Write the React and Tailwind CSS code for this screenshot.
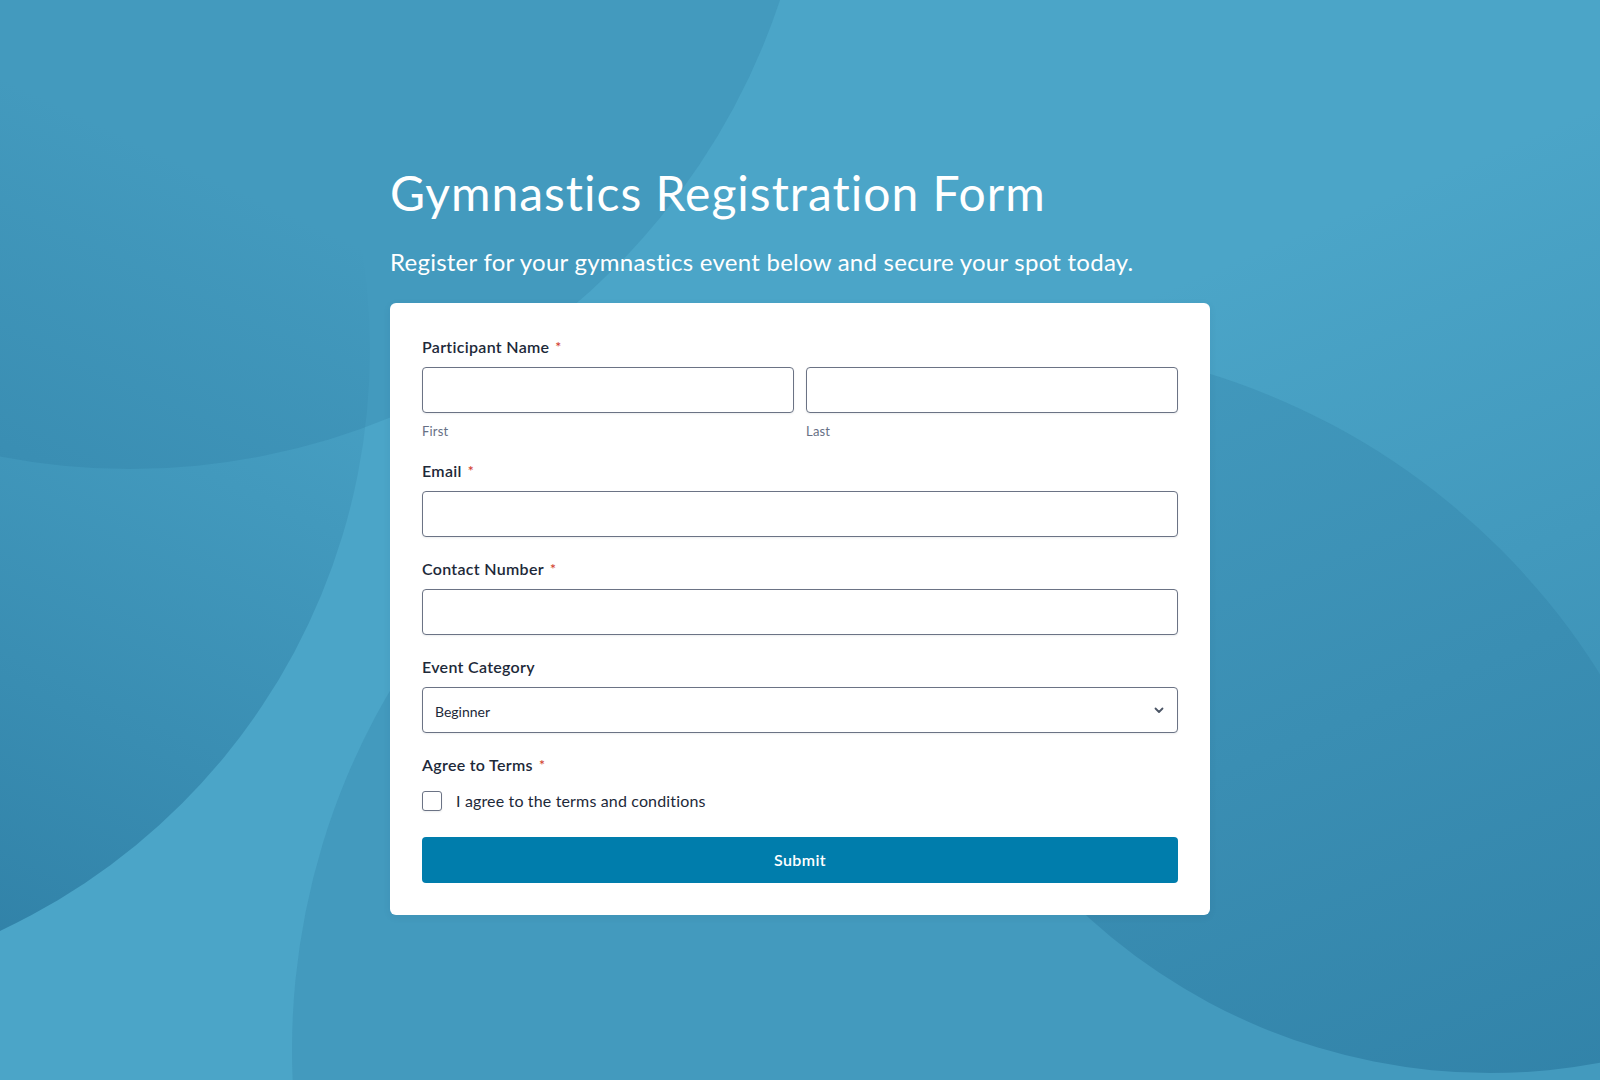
import React, { useState } from 'react';

function Label({ children, required }) {
  return (
    <label className="flex items-center text-base font-semibold leading-6 tracking-[0.3px] text-[#1d2939]">
      {children}
      {required && <span className="ml-[6px] text-sm leading-none text-[#d23f31]">*</span>}
    </label>
  );
}

function Background() {
  return (
    <svg className="absolute inset-0 h-full w-full" viewBox="0 0 1600 1080" preserveAspectRatio="none">
      <defs>
        <linearGradient id="gB" gradientUnits="userSpaceOnUse" x1="330" y1="230" x2="0" y2="930">
          <stop offset="0" stopColor="#1f6a92" stopOpacity="0" />
          <stop offset="1" stopColor="#1f6a92" stopOpacity="0.58" />
        </linearGradient>
        <linearGradient id="gQ" gradientUnits="userSpaceOnUse" x1="1250" y1="250" x2="1600" y2="1080">
          <stop offset="0" stopColor="#1f6a92" stopOpacity="0" />
          <stop offset="1" stopColor="#1f6a92" stopOpacity="0.48" />
        </linearGradient>
      </defs>
      <rect width="1600" height="1080" fill="#4ba5c8" />
      <circle cx="130" cy="-216" r="685" fill="#1f6a92" fillOpacity="0.18" />
      <circle cx="-271" cy="350" r="641" fill="url(#gB)" />
      <circle cx="1000" cy="1050" r="708" fill="#1f6a92" fillOpacity="0.18" />
      <circle cx="1490" cy="477" r="596" fill="url(#gQ)" />
    </svg>
  );
}

export default function App() {
  const [form, setForm] = useState({ first: '', last: '', email: '', phone: '', category: 'Beginner', agree: false });

  const handleChange = (e) => {
    const { name, value, type, checked } = e.target;
    setForm((prev) => ({ ...prev, [name]: type === 'checkbox' ? checked : value }));
  };

  const inputClass =
    'h-[46px] w-full rounded-[4px] border border-[#6b7385] bg-white px-3 text-sm text-[#1d2939] shadow-[0_1px_2px_rgba(16,24,40,0.08)] outline-none';

  return (
    <div className="relative min-h-screen w-full overflow-hidden font-[Lato,sans-serif] [font-variant-ligatures:none]">
      <Background />

      <div className="relative mx-auto w-[820px] pt-[163px] pb-10">
        <h1 className="text-[48px] font-normal leading-[60px] tracking-[1px] text-white">Gymnastics Registration Form</h1>
        <p className="mt-[23px] text-2xl leading-8 tracking-[0.25px] text-white">
          Register for your gymnastics event below and secure your spot today.
        </p>

        <form
          onSubmit={(e) => e.preventDefault()}
          className="mt-[25px] rounded-md bg-white p-8 shadow-[0_2px_8px_rgba(0,40,70,0.06)]"
        >
          {/* Participant Name */}
          <div>
            <Label required>Participant Name</Label>
            <div className="mt-2 grid grid-cols-2 gap-3">
              <div>
                <input name="first" value={form.first} onChange={handleChange} className={inputClass} />
                <p className="mt-[10px] text-[13px] leading-4 tracking-[0.2px] text-[#667085]">First</p>
              </div>
              <div>
                <input name="last" value={form.last} onChange={handleChange} className={inputClass} />
                <p className="mt-[10px] text-[13px] leading-4 tracking-[0.2px] text-[#667085]">Last</p>
              </div>
            </div>
          </div>

          {/* Email */}
          <div className="mt-5">
            <Label required>Email</Label>
            <input type="email" name="email" value={form.email} onChange={handleChange} className={`mt-2 ${inputClass}`} />
          </div>

          {/* Contact Number */}
          <div className="mt-5">
            <Label required>Contact Number</Label>
            <input type="tel" name="phone" value={form.phone} onChange={handleChange} className={`mt-2 ${inputClass}`} />
          </div>

          {/* Event Category */}
          <div className="mt-5">
            <Label>Event Category</Label>
            <div className="relative mt-2">
              <select
                name="category"
                value={form.category}
                onChange={handleChange}
                className={`${inputClass} appearance-none pl-[12px] pt-[3px]`}
              >
                <option>Beginner</option>
                <option>Intermediate</option>
                <option>Advanced</option>
              </select>
              <svg
                className="pointer-events-none absolute right-[13px] top-1/2 h-3 w-3 -translate-y-1/2 text-[#4b5565]"
                viewBox="0 0 12 12"
                fill="none"
                stroke="currentColor"
                strokeWidth="1.8"
                strokeLinecap="round"
                strokeLinejoin="round"
              >
                <path d="M2.5 4.5 6 8l3.5-3.5" />
              </svg>
            </div>
          </div>

          {/* Agree to Terms */}
          <div className="mt-5">
            <Label required>Agree to Terms</Label>
            <label className="mt-3 flex items-center gap-3 text-base leading-6 tracking-[0.15px] text-[#1d2939]">
              <input
                type="checkbox"
                name="agree"
                checked={form.agree}
                onChange={handleChange}
                className="h-5 w-5 appearance-none rounded-[3px] border border-[#6b7385] bg-white shadow-[0_1px_2px_rgba(16,24,40,0.08)]"
              />
              <span className="ml-[2px]">I agree to the terms and conditions</span>
            </label>
          </div>

          {/* Submit */}
          <button
            type="submit"
            className="mt-6 h-[46px] w-full rounded-[4px] bg-[#007dac] text-base font-semibold tracking-[0.4px] text-white"
          >
            Submit
          </button>
        </form>
      </div>
    </div>
  );
}
